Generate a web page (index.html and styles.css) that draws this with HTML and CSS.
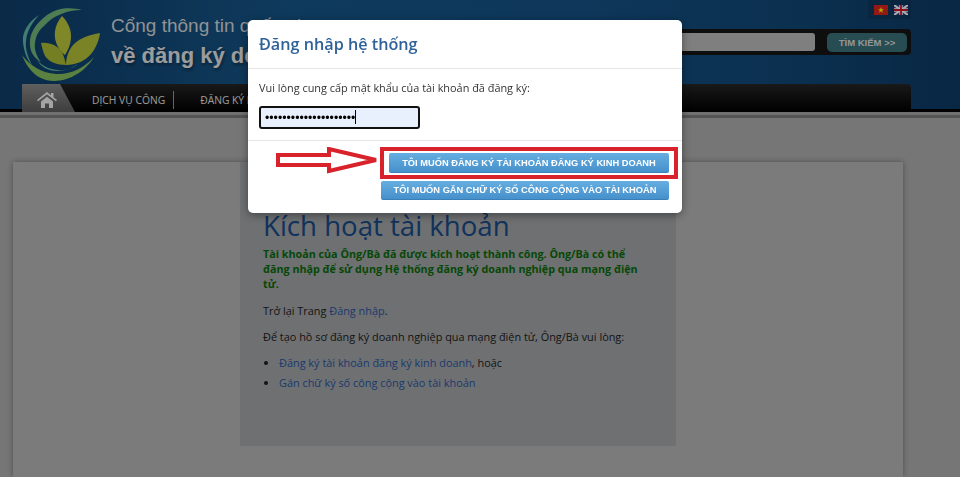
FILE: index.html
```html
<!DOCTYPE html>
<html lang="vi">
<head>
    <meta charset="UTF-8">
    <meta name="viewport" content="width=device-width, initial-scale=1.0">
    <title>Kích hoạt tài khoản</title>
    <link rel="stylesheet" href="styles.css">
</head>
<body>
    <header class="header">
        <div class="header-top">
            <svg class="logo" width="80" height="74" viewBox="0 0 80 74">
                <path d="M17 7C6 14 0 24 1 34c1 10 4 18 9 23C6 49 3 41 4 33 5 23 10 15 17 7z" fill="#5fb8a8"/>
                <path d="M60 2C50-1 36-1 25 7 13 16 7 26 8 37c0 7 5 14 11 17-4-5-7-12-6-19 1-8 4-13 10-18C31 8 45 2 60 2z" fill="#74b87c"/>
                <path d="M0 47c5 13 13 22 24 25 18 4 38-6 48-23-10 11-24 18-38 17C20 65 8 58 0 47z" fill="#86bf60"/>
                <path d="M15 52c7 8 17 11 27 10 6-1 11-3 15-7-6 5-14 8-22 8-9 0-16-4-20-11z" fill="#5fb8a8"/>
                <path d="M40 8c-5 6-8 13-7 22 1 7 5 13 10 17 3-5 6-11 6-19 0-8-4-15-9-20z" fill="#bcc83c"/>
                <path d="M19 35c9-1 17 3 21 9 2 4 3 9 4 13-9 0-17-3-21-9-2-4-3-9-4-13z" fill="#acba34"/>
                <path d="M78 25c-11 2-20 5-26 11-5 5-8 13-8 21 10 0 19-4 25-11 5-6 8-14 9-21z" fill="#b4c238"/>
            </svg>
            <div class="brand">
                <div class="brand-line">Cổng thông tin quốc gia</div>
                <div class="brand-name">về đăng ký doanh nghiệp</div>
            </div>
            <div class="tools">
                <div class="flags">
                    <svg width="14" height="10" viewBox="0 0 14 10"><rect width="14" height="10" fill="#da251d"/><path d="M7 2l.8 2.200H10L8.200 5.500l.7 2.200L7 6.300 5.100 7.700l.7-2.200L4 4.200h2.200z" fill="#ff0"/></svg>
                    <svg width="14" height="10" viewBox="0 0 14 10"><rect width="14" height="10" fill="#2b3f87"/><path d="M0 0l14 10M14 0L0 10" stroke="#fff" stroke-width="2"/><path d="M7 0v10M0 5h14" stroke="#fff" stroke-width="3.400"/><path d="M7 0v10M0 5h14" stroke="#cf142b" stroke-width="1.800"/></svg>
                </div>
                <div class="search">
                    <input class="search-input" type="text">
                    <button class="search-btn" type="button">TÌM KIẾM &gt;&gt;</button>
                </div>
            </div>
        </div>
        <nav class="nav">
            <a class="nav-home" href="#">
                <svg width="20" height="16" viewBox="0 0 20 16"><path d="M10 0L0 8l1 1.300L10 2.200l9 7.100L20 8l-3.500-2.800V1h-2.500v2.200z" fill="#f2f2f2"/><path d="M4 9.500l6-4.800 6 4.800V16h-4v-4.500H8V16H4z" fill="#f2f2f2"/></svg>
            </a>
            <a class="nav-item nav-sep" href="#">DỊCH VỤ CÔNG</a>
            <a class="nav-item" href="#">ĐĂNG KÝ DOANH NGHIỆP</a>
        </nav>
    </header>
    <div class="strip"></div>

    <main class="card">
        <section class="panel">
            <h1>Kích hoạt tài khoản</h1>
            <p class="success">Tài khoản của Ông/Bà đã được kích hoạt thành công. Ông/Bà có thể đăng nhập để sử dụng Hệ thống đăng ký doanh nghiệp qua mạng điện tử.</p>
            <p>Trở lại Trang <a href="#">Đăng nhập</a>.</p>
            <p>Để tạo hồ sơ đăng ký doanh nghiệp qua mạng điện tử, Ông/Bà vui lòng:</p>
            <ul>
                <li><a href="#">Đăng ký tài khoản đăng ký kinh doanh</a>, hoặc</li>
                <li><a href="#">Gán chữ ký số công cộng vào tài khoản</a></li>
            </ul>
        </section>
    </main>

    <div class="overlay"></div>

    <div class="modal">
        <div class="modal-header">Đăng nhập hệ thống</div>
        <div class="modal-body">
            <label for="password">Vui lòng cung cấp mật khẩu của tài khoản đã đăng ký:</label>
            <div class="password-box">
                <input type="password" id="password" value="abcdefghijklmnopqrstu">
                <span class="caret"></span>
            </div>
        </div>
        <div class="modal-footer">
            <button class="btn btn-marked" type="button">TÔI MUỐN ĐĂNG KÝ TÀI KHOẢN ĐĂNG KÝ KINH DOANH</button>
            <button class="btn" type="button">TÔI MUỐN GẮN CHỮ KÝ SỐ CÔNG CỘNG VÀO TÀI KHOẢN</button>
            <span class="mark"></span>
            <svg class="arrow" width="106" height="28" viewBox="0 0 106 28">
                <path d="M2 8H53V2L100 13 53 24V18H2z" fill="#fff" stroke="#d8222c" stroke-width="4"/>
            </svg>
        </div>
    </div>
</body>
</html>
```

FILE: styles.css
```css
body {
    margin: 0;
    height: 477px;
    overflow: hidden;
    background: #afafaf;
    font-family: "Open Sans", "Noto Sans", sans-serif;
    font-size: 10.900px;
    color: #1c1c1c;
}
.header {
    height: 112px;
    box-sizing: border-box;
    padding: 0 49px 0 22px;
    background: linear-gradient(90deg, #0f3e6a 0%, #165689 30%, #155286 60%, #114674 85%, #0d3a64 100%);
    box-shadow: inset 0 -3px 0 #000;
    display: flex;
    flex-direction: column;
    justify-content: space-between;
}
.header-top {
    display: flex;
    height: 81px;
}
.logo {
    margin-top: 8px;
    flex: none;
}
.brand {
    margin-left: 9px;
    padding-top: 13px;
    font-family: "Liberation Sans", Arial, sans-serif;
    white-space: nowrap;
}
.brand-line {
    font-size: 19px;
    line-height: 26px;
    color: #d4d8dc;
}
.brand-name {
    margin-top: 2px;
    font-size: 22px;
    font-weight: bold;
    line-height: 30px;
    color: #e6e6e6;
    text-shadow: 1px 2px 3px rgba(0, 0, 0, 0.4);
}
.tools {
    margin-left: auto;
    width: 260px;
    display: flex;
    flex-direction: column;
    align-items: flex-end;
}
.flags {
    display: flex;
    gap: 6px;
    padding: 5px 3px 0 6px;
    height: 14px;
    background: rgba(0, 0, 0, 0.12);
}
.search {
    margin-top: 10px;
    width: 100%;
    height: 26px;
    box-sizing: border-box;
    padding: 4px;
    background: #161616;
    border-radius: 4px;
    display: flex;
    justify-content: space-between;
}
.search-input {
    width: 160px;
    height: 18px;
    border: none;
    border-radius: 3px;
    padding: 0;
    background: #bcbcbc;
}
.search-btn {
    width: 80px;
    height: 19px;
    border: none;
    border-radius: 5px;
    padding: 0;
    background: #3a7078;
    color: #dcdcdc;
    font-family: "Liberation Sans", Arial, sans-serif;
    font-size: 9.500px;
    font-weight: bold;
}
.nav {
    height: 28px;
    background: linear-gradient(#262626, #000);
    border-radius: 4px 4px 0 0;
    display: flex;
    align-items: center;
}
.nav-home {
    width: 53px;
    height: 100%;
    box-sizing: border-box;
    padding: 8px 0 0 15px;
    background: linear-gradient(#8c8c8c, #5c5c5c);
    clip-path: polygon(0 0, 38px 0, 53px 100%, 0 100%);
}
.nav-item {
    margin-top: 3px;
    color: #e4e4e4;
    font-size: 10.300px;
    text-decoration: none;
    white-space: nowrap;
}
.nav-sep {
    margin-left: 17px;
    padding-right: 8px;
    line-height: 18px;
    border-right: 1px solid #999;
}
.nav-item + .nav-item {
    margin-left: 26px;
}
.strip {
    height: 6px;
    background: linear-gradient(#a6a6a6 50%, #7c7c7c 50%);
}
.card {
    margin: 44px 57px 0 13px;
    height: 315px;
    padding-left: 227px;
    background: #b6b6b6;
    box-shadow: 0 0 6px rgba(0, 0, 0, 0.35);
}
.panel {
    width: 436px;
    height: 284px;
    box-sizing: border-box;
    padding: 46px 28px 0 23px;
    background: #a3a5a8;
}
h1 {
    margin: 0 0 5px;
    font-size: 27.600px;
    font-weight: 400;
    line-height: 34px;
    color: #184a88;
}
.panel p {
    margin: 0 0 11px;
    line-height: 15px;
}
.panel .success {
    color: #0a6a0a;
    font-size: 10.750px;
    font-weight: bold;
}
.panel a {
    color: #2a55a0;
    text-decoration: none;
}
.panel ul {
    margin: -2px 0 0;
    padding-left: 16px;
}
.panel li {
    line-height: 20px;
}
.overlay {
    position: fixed;
    inset: 0;
    background: rgba(0, 0, 0, 0.32);
}
.modal {
    position: absolute;
    left: 248px;
    top: 20px;
    width: 434px;
    height: 193px;
    background: #fff;
    border-radius: 5px;
    box-shadow: 0 2px 8px rgba(0, 0, 0, 0.4);
}
.modal-header {
    height: 49px;
    box-sizing: border-box;
    padding: 13px 11px 0;
    border-bottom: 1px solid #e5e5e5;
    font-size: 16.200px;
    font-weight: 600;
    color: #2f6299;
}
.modal-body {
    height: 72px;
    box-sizing: border-box;
    padding: 11px 11px 0;
    border-bottom: 1px solid #e5e5e5;
}
.modal-body label {
    display: block;
    font-size: 10.900px;
    line-height: 16px;
    color: #333;
}
.password-box {
    position: relative;
    margin-top: 10px;
    width: 161px;
    height: 23px;
}
.password-box input {
    width: 100%;
    height: 100%;
    box-sizing: border-box;
    padding: 0 4px;
    border: 2px solid #111;
    border-radius: 3px;
    background: #e8f0fe;
    font-size: 12.300px;
    outline: none;
}
.caret {
    position: absolute;
    left: 96px;
    top: 4px;
    width: 1px;
    height: 14px;
    background: #000;
}
.modal-footer {
    position: relative;
    padding: 12px 13px 0 0;
    display: flex;
    flex-direction: column;
    align-items: flex-end;
    gap: 8px;
}
.btn {
    width: 288px;
    height: 19px;
    padding: 0;
    border: none;
    border-bottom: 1px solid #3a7fb8;
    border-radius: 2px;
    background: linear-gradient(#66aee0, #4690cc);
    color: #fff;
    font-family: "Liberation Sans", Arial, sans-serif;
    font-size: 9.300px;
    font-weight: bold;
}
.btn-marked {
    width: 280px;
    height: 20px;
}
.mark {
    position: absolute;
    left: 132px;
    top: 6px;
    width: 290px;
    height: 24px;
    border: 4px solid #d8222c;
}
.arrow {
    position: absolute;
    left: 28px;
    top: 6px;
}
```
